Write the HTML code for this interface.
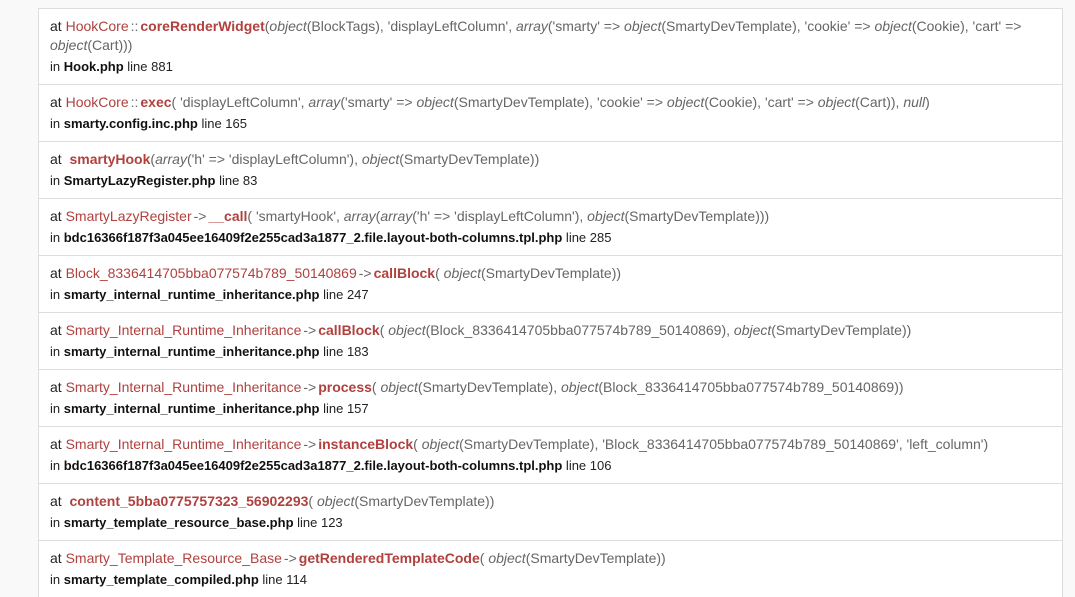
<!DOCTYPE html>
<html><head><meta charset="utf-8"><style>
body{margin:0;background:#f9f9f9;font-family:"Liberation Sans",Arial,sans-serif;width:1075px;height:560px;overflow:hidden;}
.panel{position:absolute;left:38px;top:8px;width:1023px;background:#fff;border-left:1px solid #ddd;border-right:1px solid #ddd;}
.row{border-top:1px solid #ddd;padding:8px 11px 8px 11px;color:#222;font-size:14px;line-height:19px;}
.c{color:#b0413e}
.f{color:#b0413e;font-weight:bold}
.s{color:#666;margin:0 2px}
.a{color:#666}
.a i{font-style:italic}
.in{font-size:13px;line-height:19px;margin-top:2px;color:#222}
.in b{color:#111}
</style></head><body>
<div class="panel">
<div class="row"><div>at <span class="c">HookCore</span><span class="s">::</span><span class="f">coreRenderWidget</span><span class="a">(<i>object</i>(BlockTags), 'displayLeftColumn', <i>array</i>('smarty' =&gt; <i>object</i>(SmartyDevTemplate), 'cookie' =&gt; <i>object</i>(Cookie), 'cart' =&gt; <i>object</i>(Cart)))</span></div><div class="in">in <b>Hook.php</b> line 881</div></div>
<div class="row"><div>at <span class="c">HookCore</span><span class="s">::</span><span class="f">exec</span><span class="a">( 'displayLeftColumn', <i>array</i>('smarty' =&gt; <i>object</i>(SmartyDevTemplate), 'cookie' =&gt; <i>object</i>(Cookie), 'cart' =&gt; <i>object</i>(Cart)), <i>null</i>)</span></div><div class="in">in <b>smarty.config.inc.php</b> line 165</div></div>
<div class="row"><div>at &nbsp;<span class="f">smartyHook</span><span class="a">(<i>array</i>('h' =&gt; 'displayLeftColumn'), <i>object</i>(SmartyDevTemplate))</span></div><div class="in">in <b>SmartyLazyRegister.php</b> line 83</div></div>
<div class="row"><div>at <span class="c">SmartyLazyRegister</span><span class="s">-&gt;</span><span class="f">__call</span><span class="a">( 'smartyHook', <i>array</i>(<i>array</i>('h' =&gt; 'displayLeftColumn'), <i>object</i>(SmartyDevTemplate)))</span></div><div class="in">in <b>bdc16366f187f3a045ee16409f2e255cad3a1877_2.file.layout-both-columns.tpl.php</b> line 285</div></div>
<div class="row"><div>at <span class="c">Block_8336414705bba077574b789_50140869</span><span class="s">-&gt;</span><span class="f">callBlock</span><span class="a">( <i>object</i>(SmartyDevTemplate))</span></div><div class="in">in <b>smarty_internal_runtime_inheritance.php</b> line 247</div></div>
<div class="row"><div>at <span class="c">Smarty_Internal_Runtime_Inheritance</span><span class="s">-&gt;</span><span class="f">callBlock</span><span class="a">( <i>object</i>(Block_8336414705bba077574b789_50140869), <i>object</i>(SmartyDevTemplate))</span></div><div class="in">in <b>smarty_internal_runtime_inheritance.php</b> line 183</div></div>
<div class="row"><div>at <span class="c">Smarty_Internal_Runtime_Inheritance</span><span class="s">-&gt;</span><span class="f">process</span><span class="a">( <i>object</i>(SmartyDevTemplate), <i>object</i>(Block_8336414705bba077574b789_50140869))</span></div><div class="in">in <b>smarty_internal_runtime_inheritance.php</b> line 157</div></div>
<div class="row"><div>at <span class="c">Smarty_Internal_Runtime_Inheritance</span><span class="s">-&gt;</span><span class="f">instanceBlock</span><span class="a">( <i>object</i>(SmartyDevTemplate), 'Block_8336414705bba077574b789_50140869', 'left_column')</span></div><div class="in">in <b>bdc16366f187f3a045ee16409f2e255cad3a1877_2.file.layout-both-columns.tpl.php</b> line 106</div></div>
<div class="row"><div>at &nbsp;<span class="f">content_5bba0775757323_56902293</span><span class="a">( <i>object</i>(SmartyDevTemplate))</span></div><div class="in">in <b>smarty_template_resource_base.php</b> line 123</div></div>
<div class="row"><div>at <span class="c">Smarty_Template_Resource_Base</span><span class="s">-&gt;</span><span class="f">getRenderedTemplateCode</span><span class="a">( <i>object</i>(SmartyDevTemplate))</span></div><div class="in">in <b>smarty_template_compiled.php</b> line 114</div></div>
</div>
</body></html>
